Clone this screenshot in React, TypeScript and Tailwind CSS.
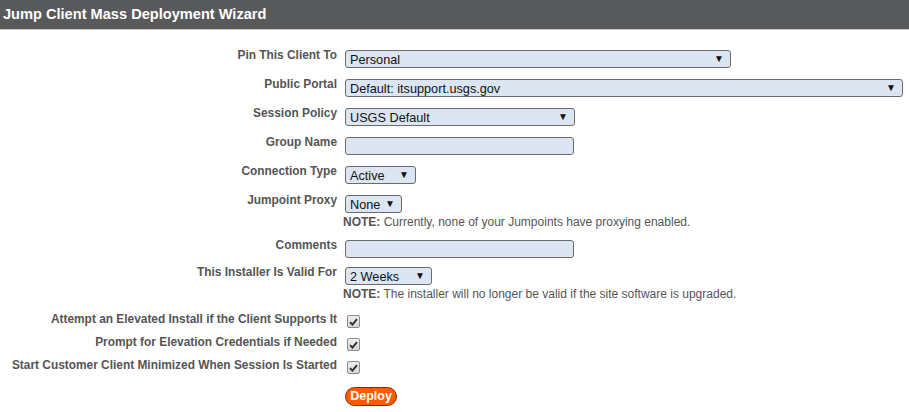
const font = { fontFamily: '"Liberation Sans", Arial, sans-serif' };

function Select({ value, width }: { value: string; width: string }) {
  return (
    <div
      className={`${width} h-[18px] flex items-center justify-between rounded-[3px] border border-[#6b6b6b] bg-[#dce6f2] pl-[4px] pr-[6px] text-[12.7px] leading-[16px] text-[#111]`}
    >
      <span className="pt-[1px]">{value}</span>
      <span className="text-[10px] leading-none text-[#111]">▼</span>
    </div>
  );
}

function TextInput() {
  return <div className="w-[229px] h-[18px] rounded-[3px] border border-[#6b6b6b] bg-[#dce6f2]" />;
}

function Check() {
  return (
    <div className="ml-[2px] mt-[1px] w-[13px] h-[13px] rounded-[2px] border border-[#8c8c8c] bg-gradient-to-b from-[#f0f0f0] to-[#d4d4d4] flex items-center justify-center">
      <svg width="9" height="8" viewBox="0 0 9 8">
        <path d="M1 4.2 L3.4 6.6 L8 1.2" fill="none" stroke="#2b2b2b" strokeWidth="1.8" />
      </svg>
    </div>
  );
}

function Note({ children }: { children: React.ReactNode }) {
  return (
    <div className="mt-[2px] -ml-[2px] text-[12px] leading-[15px] text-[#555]">
      <b>NOTE:</b> {children}
    </div>
  );
}

function Row({ label, children, gap = 'mb-[11px]' }: { label: string; children: React.ReactNode; gap?: string }) {
  return (
    <div className={`flex items-start ${gap}`}>
      <div className="w-[337px] shrink-0 text-right font-bold text-[11.9px] leading-[14px] -mt-[2px] text-[#555]">
        {label}
      </div>
      <div className="ml-[8px]">{children}</div>
    </div>
  );
}

export default function App() {
  return (
    <div className="w-[909px] h-[412px] bg-white overflow-hidden" style={font}>
      <div className="h-[30px] bg-[#58595b] border-b border-[#c8c8c8] flex items-center pl-[3px]">
        <span className="text-white font-bold text-[14.6px] leading-none -mt-[1px]">
          Jump Client Mass Deployment Wizard
        </span>
      </div>
      <div className="pt-[20px]">
        <Row label="Pin This Client To">
          <Select value="Personal" width="w-[386px]" />
        </Row>
        <Row label="Public Portal">
          <Select value="Default: itsupport.usgs.gov" width="w-[558px]" />
        </Row>
        <Row label="Session Policy">
          <Select value="USGS Default" width="w-[230px]" />
        </Row>
        <Row label="Group Name">
          <TextInput />
        </Row>
        <Row label="Connection Type">
          <Select value="Active" width="w-[71px]" />
        </Row>
        <Row label="Jumpoint Proxy" gap="mb-[10px]">
          <Select value="None" width="w-[57px]" />
          <Note>Currently, none of your Jumpoints have proxying enabled.</Note>
        </Row>
        <Row label="Comments" gap="mb-[9px]">
          <TextInput />
        </Row>
        <Row label="This Installer Is Valid For" gap="mb-[12px]">
          <Select value="2 Weeks" width="w-[87px]" />
          <Note>The installer will no longer be valid if the site software is upgraded.</Note>
        </Row>
        <Row label="Attempt an Elevated Install if the Client Supports It" gap="mb-[9px]">
          <Check />
        </Row>
        <Row label="Prompt for Elevation Credentials if Needed" gap="mb-[9px]">
          <Check />
        </Row>
        <Row label="Start Customer Client Minimized When Session Is Started" gap="mb-[9px]">
          <Check />
        </Row>
        <div className="pl-[345px]">
          <button className="h-[19px] w-[52px] rounded-full border border-[#8a2a00] bg-[#ff5a00] text-white font-bold text-[12.5px] leading-[17px]">
            Deploy
          </button>
        </div>
      </div>
    </div>
  );
}
